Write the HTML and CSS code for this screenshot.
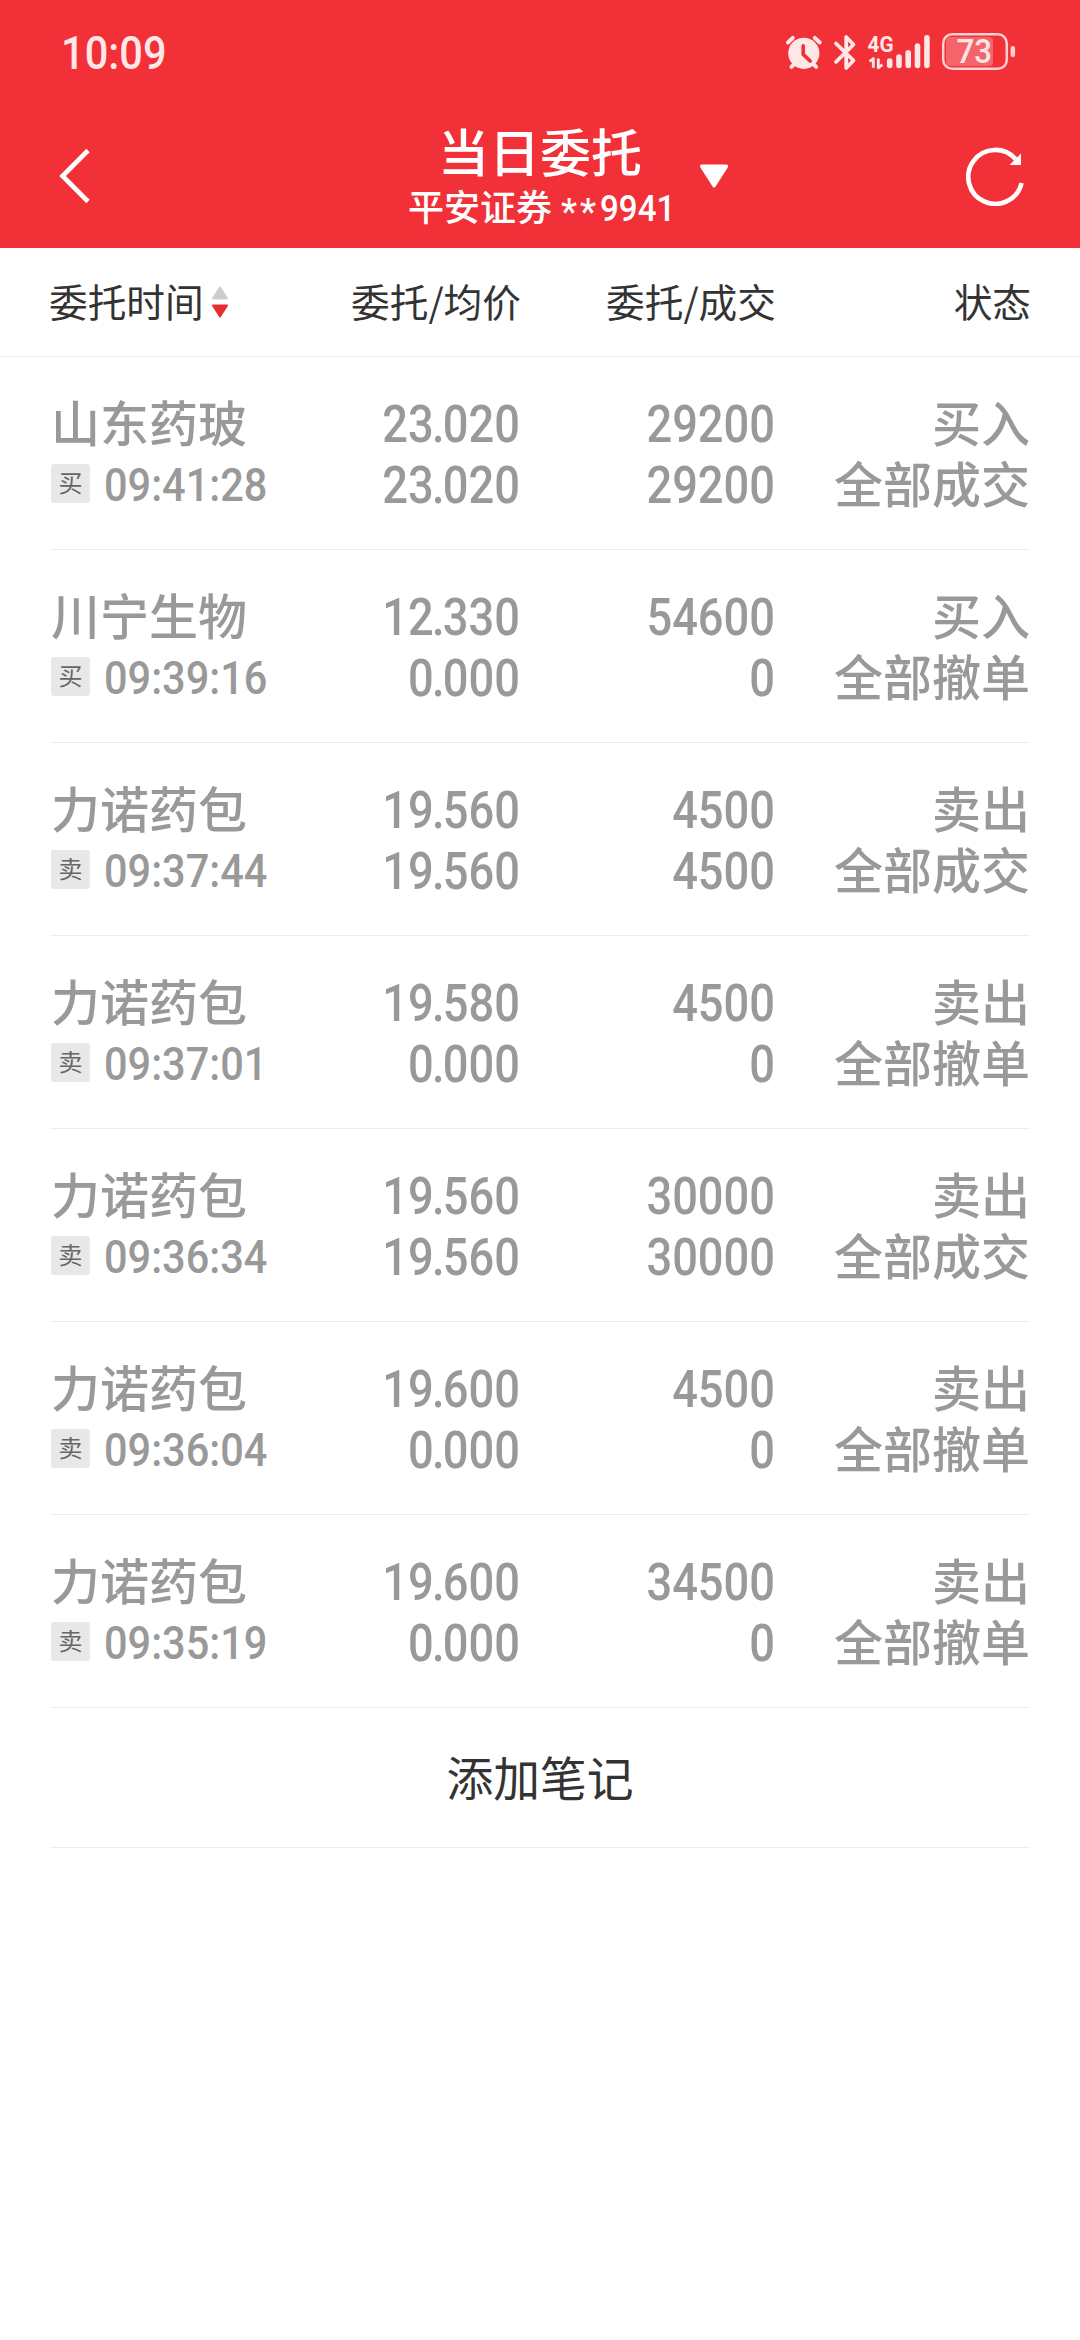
FILE: index.html
```
<!DOCTYPE html>
<html lang="zh-CN">
<head>
<meta charset="utf-8">
<title>当日委托</title>
<link rel="stylesheet" href="styles.css">
</head>
<body>
<header class="top">
  <div class="status">
    <span class="clock">10:09</span>
    <svg class="status-icons" width="240" height="44" viewBox="784 31 240 44">
      <g fill="#ffe6e7" stroke="#ffe6e7" stroke-linecap="round">
        <circle cx="803.8" cy="53.3" r="15.6" stroke="none"/>
        <path d="M788 42.5l4.8-4.6M814.8 37.9l5 4.6M791.5 66.8l3-3M816.2 66.8l-3-3" fill="none" stroke-width="4"/>
        <path d="M803.2 45.8v8.6l7 6.6" fill="none" stroke="#f13038" stroke-width="3.6"/>
        <path d="M836 43.5l17.5 17-7.3 7.4V56M836 61.8l17.5-17.3-7.3-7.5V50" fill="none" stroke-width="3.8" stroke-linejoin="round"/>
        <path d="M869.5 61.5l3.8-3v9.3M878.3 58.5v9.3l4-3.2" fill="none" stroke-width="2.8" stroke-linejoin="round" stroke-linecap="butt"/>
        <path d="M889.7 61v4.5M899 57v8.5M908.2 52.8v12.7M917.5 46v19.5M926.9 37.7v27.8" stroke-width="5.6"/>
      </g>
      <rect x="946" y="37" width="47" height="29" rx="4" fill="#f4656b"/>
      <rect x="943.2" y="34.2" width="63.6" height="34.6" rx="9" fill="none" stroke="#ffd0d2" stroke-width="2.5"/>
      <rect x="1010.6" y="46" width="4.5" height="11" rx="2" fill="#ffd0d2"/>
      <text class="net" x="867.5" y="51.5" textLength="26" lengthAdjust="spacingAndGlyphs">4G</text>
      <text class="level" x="956.5" y="63.3" textLength="35.5" lengthAdjust="spacingAndGlyphs">73</text>
    </svg>
  </div>
  <div class="nav">
    <svg class="back" width="34" height="58" viewBox="0 0 34 58"><path d="M31 3.500L5.500 29l25.500 25.500" fill="none" stroke="#fff" stroke-width="4.600"/></svg>
    <div class="title">
      <h1 class="name">当日委托</h1>
      <p class="account"><span>平安证券</span><span class="mask">**</span><span class="account-no">9941</span></p>
    </div>
    <svg class="drop" width="32" height="26" viewBox="0 0 32 26"><path d="M2.500 2.500h27L16 23.500z" fill="#fff" stroke="#fff" stroke-width="4" stroke-linejoin="round" transform="translate(1.500 1) scale(.91 .92)"/></svg>
    <svg class="reload" width="60" height="60" viewBox="0 0 60 60"><path d="M55.600 37A27 27 0 1 1 49.500 13" fill="none" stroke="#fff" stroke-width="4.600"/><path d="M55 7.500v11.500H43.500z" fill="#fff"/></svg>
  </div>
</header>
<main>
  <div class="head cols">
    <div class="sort">委托时间<svg width="18" height="32" viewBox="0 0 18 32"><path d="M9 1.500L16 12.500H2z" fill="#ccc" stroke="#ccc" stroke-width="2" stroke-linejoin="round"/><path d="M2 19.500h14L9 30.500z" fill="#e62e2e" stroke="#e62e2e" stroke-width="2" stroke-linejoin="round"/></svg></div>
    <div>委托/均价</div><div>委托/成交</div><div>状态</div>
  </div>
  <div class="list">
    <div class="row cols"><div class="stock"><b>山东药玻</b><p><i>买</i><time>09:41:28</time></p></div><div class="num">23<u>.</u>020<br>23<u>.</u>020</div><div class="num">29200<br>29200</div><div class="state">买入<br>全部成交</div></div>
    <div class="row cols"><div class="stock"><b>川宁生物</b><p><i>买</i><time>09:39:16</time></p></div><div class="num">12<u>.</u>330<br>0<u>.</u>000</div><div class="num">54600<br>0</div><div class="state">买入<br>全部撤单</div></div>
    <div class="row cols"><div class="stock"><b>力诺药包</b><p><i>卖</i><time>09:37:44</time></p></div><div class="num">19<u>.</u>560<br>19<u>.</u>560</div><div class="num">4500<br>4500</div><div class="state">卖出<br>全部成交</div></div>
    <div class="row cols"><div class="stock"><b>力诺药包</b><p><i>卖</i><time>09:37:01</time></p></div><div class="num">19<u>.</u>580<br>0<u>.</u>000</div><div class="num">4500<br>0</div><div class="state">卖出<br>全部撤单</div></div>
    <div class="row cols"><div class="stock"><b>力诺药包</b><p><i>卖</i><time>09:36:34</time></p></div><div class="num">19<u>.</u>560<br>19<u>.</u>560</div><div class="num">30000<br>30000</div><div class="state">卖出<br>全部成交</div></div>
    <div class="row cols"><div class="stock"><b>力诺药包</b><p><i>卖</i><time>09:36:04</time></p></div><div class="num">19<u>.</u>600<br>0<u>.</u>000</div><div class="num">4500<br>0</div><div class="state">卖出<br>全部撤单</div></div>
    <div class="row cols"><div class="stock"><b>力诺药包</b><p><i>卖</i><time>09:35:19</time></p></div><div class="num">19<u>.</u>600<br>0<u>.</u>000</div><div class="num">34500<br>0</div><div class="state">卖出<br>全部撤单</div></div>
    <div class="note">添加笔记</div>
  </div>
</main>
</body>
</html>
```
FILE: styles.css
```
* { box-sizing: border-box; margin: 0; padding: 0; }
body { min-height: 2340px; background: #fff; color: #333; font-family: "Noto Sans CJK SC", sans-serif; }
svg { display: block; flex: none; }

.top { height: 248px; background: #f13038; color: #fff; }
.status { height: 104px; padding: 31px 56px 0 61px; display: flex; justify-content: space-between; }
.clock { font: 500 47px/44px Roboto, sans-serif; color: #ffe6e7; transform: scaleX(.885); transform-origin: left; }
.net { font: 700 22px Roboto, sans-serif; fill: #ffe6e7; }
.level { font: 500 33px Roboto, sans-serif; fill: #ffe6e7; }

.nav { height: 144px; display: grid; grid-template-columns: 57px 341px 284px 16px 32px 236px 60px; }
.back { grid-column: 2; margin-top: 43px; }
.title { grid-column: 3; text-align: center; padding-top: 17px; }
.name { font-size: 51px; line-height: 59px; font-weight: 500; }
.account { display: flex; height: 42px; margin: 4px 0 0 10px; font-size: 36px; line-height: 42px; font-weight: 500; white-space: nowrap; }
.account span:first-child { width: 153px; text-align: left; }
.mask { width: 39px; padding-top: 7px; text-align: left; font-family: Roboto, sans-serif; letter-spacing: 3px; }
.account-no { padding-top: 4px; text-align: left; font-family: Roboto, sans-serif; transform: scaleX(.92); transform-origin: left; }
.drop { grid-column: 5; margin-top: 59px; }
.reload { grid-column: 7; margin-top: 42px; }

.cols { display: grid; grid-template-columns: 270px 200px 255px 255px; text-align: right; }
.head { height: 109px; padding: 0 49px 0 49px; border-bottom: 1px solid #ededed; font-size: 38.7px; line-height: 105px; }
.head.cols { grid-template-columns: 270px 202px 255px 255px; }
.sort { display: flex; align-items: center; gap: 7px; height: 105px; text-align: left; }
.sort svg { margin-top: 3px; }
.list { padding: 0 50px; }
.row { height: 193px; border-bottom: 1px solid #ededed; color: #999; font-size: 49px; line-height: 61px; font-weight: 500; padding-top: 33px; }
.stock { text-align: left; padding-left: 1px; }
.stock b { display: block; font-weight: 500; }
.stock p { display: flex; align-items: center; gap: 14px; padding-top: 2px; }
.stock i { width: 39px; height: 39px; margin-bottom: 2px; border-radius: 3px; background: #e8e8e8; color: #666; font: 400 24px/36px "Noto Sans CJK SC", sans-serif; text-align: center; }
.stock time { font: 500 47px/61px Roboto, sans-serif; padding-top: 1px; transform: scaleX(.883); transform-origin: left; }
.num { font: 500 52px/61px Roboto, sans-serif; padding-top: 4px; transform: scaleX(.87); transform-origin: right; }
.num u { text-decoration: none; margin: 0 -2px; }
.note { height: 140px; border-bottom: 1px solid #ededed; text-align: center; font-size: 46.8px; line-height: 135px; }
```
